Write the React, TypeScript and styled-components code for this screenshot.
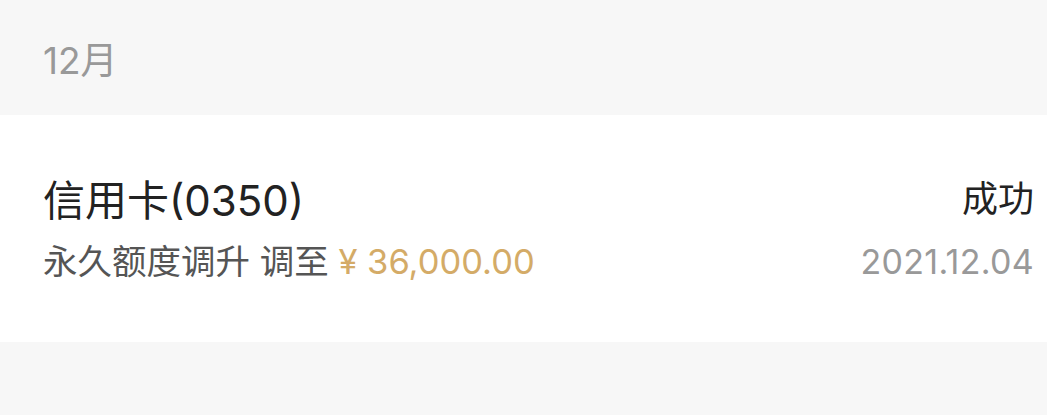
import React from "react";
import styled, { createGlobalStyle } from "styled-components";

const GlobalStyle = createGlobalStyle`
  html, body {
    margin: 0;
    padding: 0;
    background: #f7f7f7;
  }
  body {
    font-family: Inter, "Noto Sans CJK SC", sans-serif;
  }
`;

const Page = styled.div`
  width: 1047px;
  min-height: 415px;
  background: #f7f7f7;
`;

const MonthHeader = styled.div`
  height: 115px;
  display: flex;
  align-items: center;
  padding-left: 43px;
  box-sizing: border-box;
  font-size: 37px;
  color: #999999;
`;

const Card = styled.div`
  background: #ffffff;
  height: 227px;
  box-sizing: border-box;
  padding: 2px 13px 0 43px;
  display: flex;
  flex-direction: column;
  justify-content: center;
  gap: 14px;
`;

const Row = styled.div`
  display: flex;
  justify-content: space-between;
  align-items: center;
`;

const Title = styled.div`
  font-size: 42px;
  line-height: 50px;
  color: #222222;
`;

const Status = styled.div`
  font-size: 36px;
  line-height: 50px;
  color: #222222;
  margin-top: -4px;
`;

const Sub = styled.div`
  font-size: 34.5px;
  line-height: 44px;
  color: #555555;
`;

const Amount = styled.span`
  color: #d4ab67;
`;

const DateText = styled.div`
  font-size: 34px;
  line-height: 44px;
  color: #999999;
  letter-spacing: 0.3px;
`;

export default function App() {
  return (
    <Page>
      <GlobalStyle />
      <MonthHeader>12月</MonthHeader>
      <Card>
        <Row>
          <Title>信用卡(0350)</Title>
          <Status>成功</Status>
        </Row>
        <Row>
          <Sub>
            永久额度调升 调至 <Amount>¥ 36,000.00</Amount>
          </Sub>
          <DateText>2021.12.04</DateText>
        </Row>
      </Card>
    </Page>
  );
}
